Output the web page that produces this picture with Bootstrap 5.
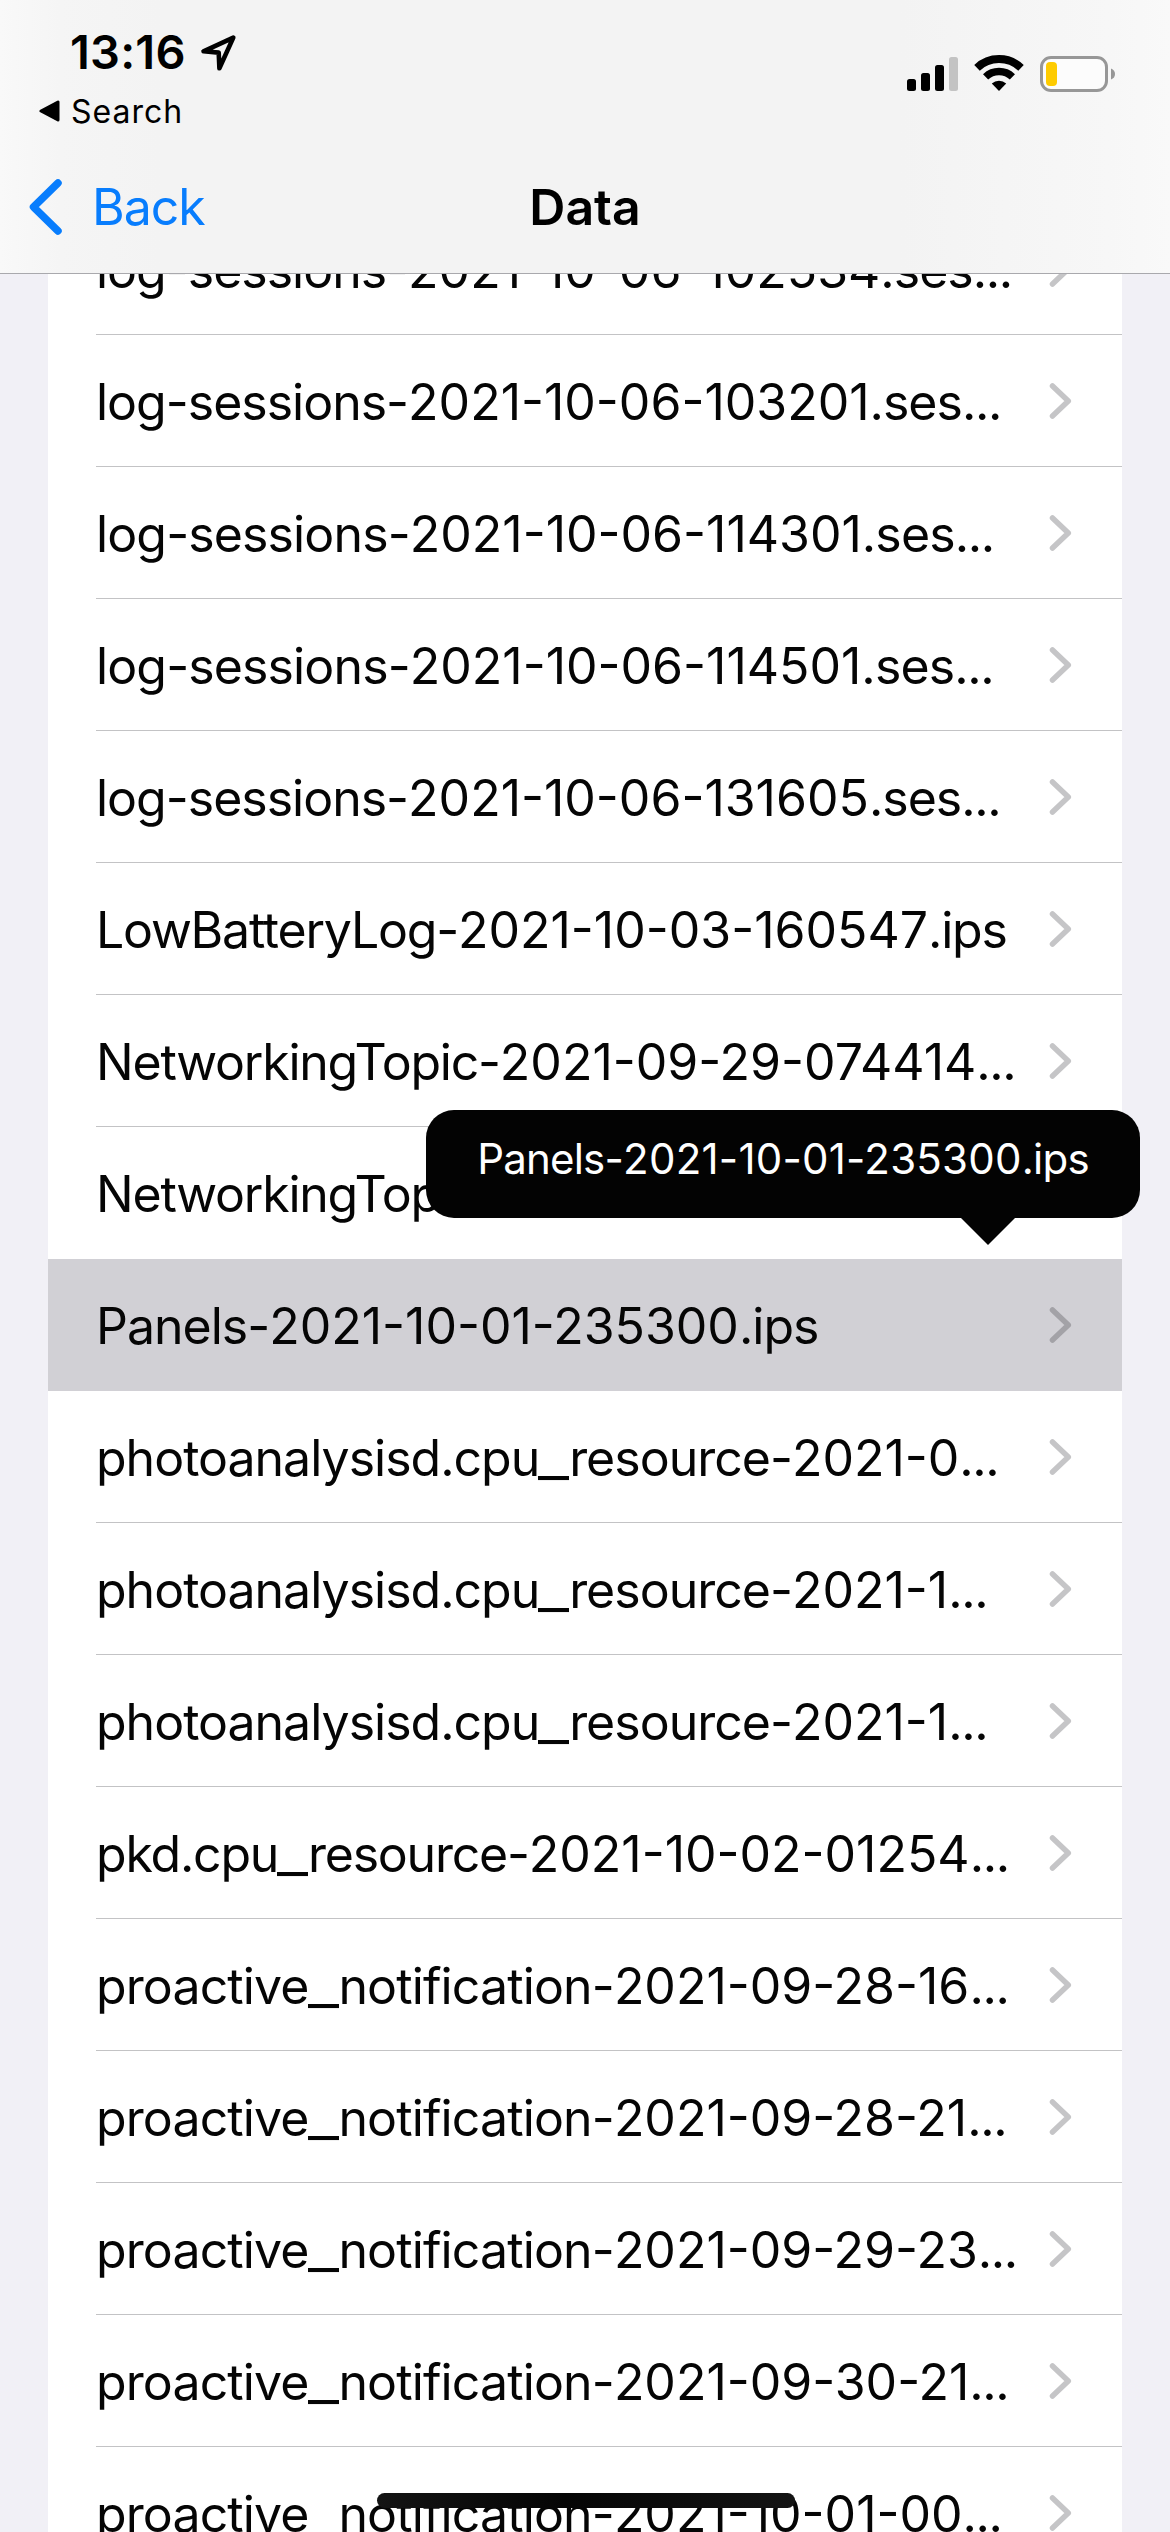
<!DOCTYPE html>
<html lang="en">
<head>
<meta charset="utf-8">
<meta name="viewport" content="width=device-width, initial-scale=1">
<title>Data</title>
<link href="https://cdn.jsdelivr.net/npm/bootstrap@5.3.0/dist/css/bootstrap.min.css" rel="stylesheet">
<style>
body{font-family:Inter,"Liberation Sans",sans-serif;background:#f1f0f6;color:#050505;height:2532px;overflow:hidden;font-size:50px;line-height:60px}
svg{flex:none;display:block}
.topbar{height:274px;border-bottom:1px solid #a9a9ad;background:linear-gradient(90deg,#f9f9f9 0,#f5f5f5 60px,#f3f3f3 160px,#f3f3f3 900px,#f7f7f7 1110px,#f9f9f9 100%);z-index:3}
.statusline{height:84px;padding:24px 54px 0 70px}
.clock{font-size:47px;font-weight:600;line-height:56px;letter-spacing:.2px;color:#000}
.gps{margin:10px 0 0 14px}
.indicators{margin-top:30px}
.crumb{height:56px;padding-left:39px;font-size:32px;line-height:56px;gap:11px;letter-spacing:1px;color:#000}
.crumb svg{margin-top:16px}
.titlebar{height:133px}
.side{width:400px;padding-left:28px;color:#087dfd;gap:29px;letter-spacing:-1px}
.title{font-weight:600;color:#000}
.files{margin:-71px 48px 0}
.files .list-group-item{height:132px;padding:0 49px 0 48px;border:0;border-radius:0;background:#fff;color:#050505}
.files .list-group-item::after{content:"";position:absolute;left:48px;right:0;bottom:0;height:1px;background:#c3c3c5}
.files .picked{background:#d1d0d5}
.files .picked::after,.files .above-picked::after{display:none}
.fname{padding-top:1px;white-space:nowrap;letter-spacing:-1px}
.fname.tight{letter-spacing:-1.22px}
.fname.loose{letter-spacing:-.87px}
.fname i,.fname b{font-style:normal;font-weight:400;letter-spacing:0}
.fname b{letter-spacing:-1.4px}
.fname u{display:inline-block;text-decoration:none;letter-spacing:0;transform:scaleX(1.36);margin:0 4px 0 3px}
.chev{fill:none;stroke:#c5c5c7;stroke-width:5.5;stroke-linecap:round;stroke-linejoin:round}
.picked .chev{stroke:#a3a2a7}
.bubble{left:426px;top:1110px;width:714px;height:108px;border-radius:28px;background:#030303;color:#fff;font-size:42px;padding-bottom:11px;z-index:2;letter-spacing:-.8px}
.bubble i{font-style:normal;letter-spacing:.25px}
.bubble svg{left:534px;top:107px}
.homebar{left:377px;top:2493px;width:418px;height:15px;border-radius:8px;background:linear-gradient(90deg,#141414,#050505 45%,#141414);z-index:4}
</style>
<script src="https://cdn.jsdelivr.net/npm/bootstrap@5.3.0/dist/js/bootstrap.bundle.min.js"></script>
</head>
<body class="position-relative">
<svg class="d-none"><symbol id="chevron" viewBox="0 0 24 36"><path d="M3.500 3 19.300 18 3.500 33"/></symbol></svg>

<header class="topbar position-relative">
  <div class="statusline d-flex justify-content-between align-items-start">
    <div class="d-flex"><span class="clock">13:16</span>
      <svg class="gps" width="38" height="38" viewBox="0 0 38 38" fill="none" stroke="#000" stroke-width="4.600" stroke-linejoin="round"><path d="M33.300 3.600 3.500 17.300 18.700 18.600 19.400 34.300Z"/></svg>
    </div>
    <svg class="indicators" width="212" height="40" viewBox="904 54 212 40">
      <rect x="907" y="79" width="9" height="12" rx="2.500"/><rect x="921" y="73" width="9" height="18" rx="2.500"/><rect x="935" y="65" width="9" height="26" rx="2.500"/><rect x="949" y="57" width="9" height="34" rx="2.500" fill="#c3c3c3"/>
      <g fill="none" stroke="#000"><path stroke-width="8" d="M977 67.800A32 32 0 0 1 1021 67.800"/><path stroke-width="7.500" d="M985.600 76.900A19.500 19.500 0 0 1 1012.400 76.900"/></g>
      <path d="M999 91 991.800 83.600A10.500 10.500 0 0 1 1006.200 83.600Z"/>
      <rect x="1041.500" y="57.500" width="65" height="33" rx="9.500" fill="#fcfcfc" stroke="#979797" stroke-width="3"/>
      <rect x="1046" y="62" width="11" height="24" rx="4" fill="#fecb00"/>
      <path d="M1111 68.500Q1115 70 1115 74T1111 79.500Z" fill="#979797"/>
    </svg>
  </div>
  <div class="crumb d-flex align-items-start">
    <svg width="21" height="22" viewBox="0 0 21 22"><path d="M2 11 19 2V20Z" stroke="#000" stroke-width="3" stroke-linejoin="round"/></svg><span>Search</span>
  </div>
  <div class="titlebar d-flex align-items-center justify-content-between">
    <div class="side d-flex align-items-center"><svg width="35" height="58" viewBox="0 0 35 58" fill="none" stroke="#087dfd" stroke-width="7.500" stroke-linecap="round" stroke-linejoin="round"><path d="M30 5 5.500 29 30 53"/></svg><span>Back</span></div>
    <span class="title">Data</span>
    <div class="side"></div>
  </div>
</header>

<main class="list-group list-group-flush files">
  <div class="list-group-item d-flex align-items-center justify-content-between"><span class="fname">log-sessions-<i>2021-10-06-102534</i>.ses<b>...</b></span><svg class="chev" width="24" height="36"><use href="#chevron"/></svg></div>
  <div class="list-group-item d-flex align-items-center justify-content-between"><span class="fname">log-sessions-<i>2021-10-06-103201</i>.ses<b>...</b></span><svg class="chev" width="24" height="36"><use href="#chevron"/></svg></div>
  <div class="list-group-item d-flex align-items-center justify-content-between"><span class="fname loose">log-sessions-<i>2021-10-06-114301</i>.ses<b>...</b></span><svg class="chev" width="24" height="36"><use href="#chevron"/></svg></div>
  <div class="list-group-item d-flex align-items-center justify-content-between"><span class="fname loose">log-sessions-<i>2021-10-06-114501</i>.ses<b>...</b></span><svg class="chev" width="24" height="36"><use href="#chevron"/></svg></div>
  <div class="list-group-item d-flex align-items-center justify-content-between"><span class="fname">log-sessions-<i>2021-10-06-131605</i>.ses<b>...</b></span><svg class="chev" width="24" height="36"><use href="#chevron"/></svg></div>
  <div class="list-group-item d-flex align-items-center justify-content-between"><span class="fname tight">LowBatteryLog-<i>2021-10-03-160547</i>.ips</span><svg class="chev" width="24" height="36"><use href="#chevron"/></svg></div>
  <div class="list-group-item d-flex align-items-center justify-content-between"><span class="fname tight">NetworkingTopic-<i>2021-09-29-074414</i><b>...</b></span><svg class="chev" width="24" height="36"><use href="#chevron"/></svg></div>
  <div class="list-group-item above-picked d-flex align-items-center justify-content-between"><span class="fname tight">NetworkingTop</span><svg class="chev" width="24" height="36"><use href="#chevron"/></svg></div>
  <div class="list-group-item picked d-flex align-items-center justify-content-between"><span class="fname">Panels-<i>2021-10-01-235300</i>.ips</span><svg class="chev" width="24" height="36"><use href="#chevron"/></svg></div>
  <div class="list-group-item d-flex align-items-center justify-content-between"><span class="fname">photoanalysisd.cpu<u>_</u>resource-<i>2021-0</i><b>...</b></span><svg class="chev" width="24" height="36"><use href="#chevron"/></svg></div>
  <div class="list-group-item d-flex align-items-center justify-content-between"><span class="fname">photoanalysisd.cpu<u>_</u>resource-<i>2021-1</i><b>...</b></span><svg class="chev" width="24" height="36"><use href="#chevron"/></svg></div>
  <div class="list-group-item d-flex align-items-center justify-content-between"><span class="fname">photoanalysisd.cpu<u>_</u>resource-<i>2021-1</i><b>...</b></span><svg class="chev" width="24" height="36"><use href="#chevron"/></svg></div>
  <div class="list-group-item d-flex align-items-center justify-content-between"><span class="fname tight">pkd.cpu<u>_</u>resource-<i>2021-10-02-01254</i><b>...</b></span><svg class="chev" width="24" height="36"><use href="#chevron"/></svg></div>
  <div class="list-group-item d-flex align-items-center justify-content-between"><span class="fname loose">proactive<u>_</u>notification-<i>2021-09-28-16</i><b>...</b></span><svg class="chev" width="24" height="36"><use href="#chevron"/></svg></div>
  <div class="list-group-item d-flex align-items-center justify-content-between"><span class="fname loose">proactive<u>_</u>notification-<i>2021-09-28-21</i><b>...</b></span><svg class="chev" width="24" height="36"><use href="#chevron"/></svg></div>
  <div class="list-group-item d-flex align-items-center justify-content-between"><span class="fname loose">proactive<u>_</u>notification-<i>2021-09-29-23</i><b>...</b></span><svg class="chev" width="24" height="36"><use href="#chevron"/></svg></div>
  <div class="list-group-item d-flex align-items-center justify-content-between"><span class="fname loose">proactive<u>_</u>notification-<i>2021-09-30-21</i><b>...</b></span><svg class="chev" width="24" height="36"><use href="#chevron"/></svg></div>
  <div class="list-group-item d-flex align-items-center justify-content-between"><span class="fname loose">proactive<u>_</u>notification-<i>2021-10-01-00</i><b>...</b></span><svg class="chev" width="24" height="36"><use href="#chevron"/></svg></div>
</main>

<div class="bubble position-absolute d-flex align-items-center justify-content-center"><span>Panels-<i>2021-10-01-235300</i>.ips</span>
  <svg class="position-absolute" width="56" height="28" viewBox="0 0 56 28"><path d="M0 0H56L28 28Z" fill="#030303"/></svg>
</div>
<div class="homebar position-absolute"></div>
</body>
</html>
